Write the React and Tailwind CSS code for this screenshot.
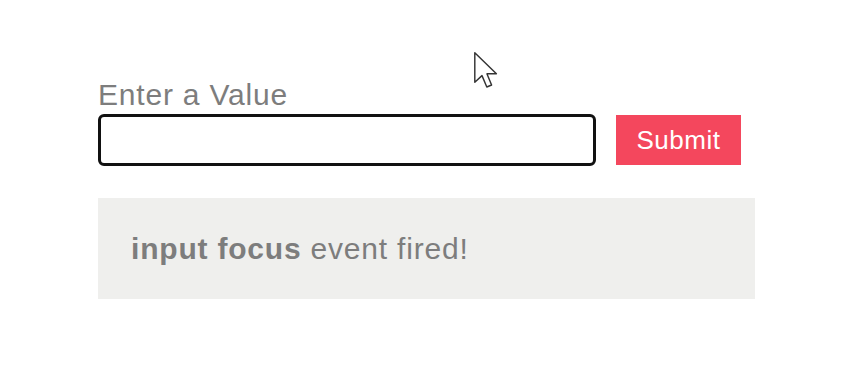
import React from "react";

export default function App() {
  return (
    <div className="relative w-[854px] h-[366px] bg-white overflow-hidden font-['Liberation_Sans',Arial,sans-serif]">
      {/* mouse pointer */}
      <svg className="absolute left-[473px] top-[51px]" width="30" height="40" viewBox="0 0 25 33.3">
        <path d="M1.5 1.5 L1.5 26 L7.5 20.5 L11.5 30 L15.5 28.3 L11.6 19 L19.5 19 Z" fill="#fff" stroke="#333" strokeWidth="1.2" strokeLinejoin="round" />
      </svg>

      <div className="pl-[98px] pt-[78px] w-[755px]">
        <label htmlFor="val" className="block text-[30px] leading-[34px] tracking-[0.8px] text-[#7d7d7d]">
          Enter a Value
        </label>
        <div className="flex items-center gap-[20px] mt-[2px]">
          <input
            id="val"
            type="text"
            className="w-[498px] h-[52px] border-[3px] border-[#111] rounded-[6px] px-2 outline-none"
          />
          <button className="w-[125px] h-[50px] bg-[#f4475d] text-white text-[26px] tracking-[0.5px]">
            Submit
          </button>
        </div>
        <div className="mt-[32px] h-[101px] bg-[#efefed] pl-[33px] flex items-center text-[30px] tracking-[0.8px] text-[#7d7d7d]">
          <span>
            <b className="font-bold">input focus</b> event fired!
          </span>
        </div>
      </div>
    </div>
  );
}
